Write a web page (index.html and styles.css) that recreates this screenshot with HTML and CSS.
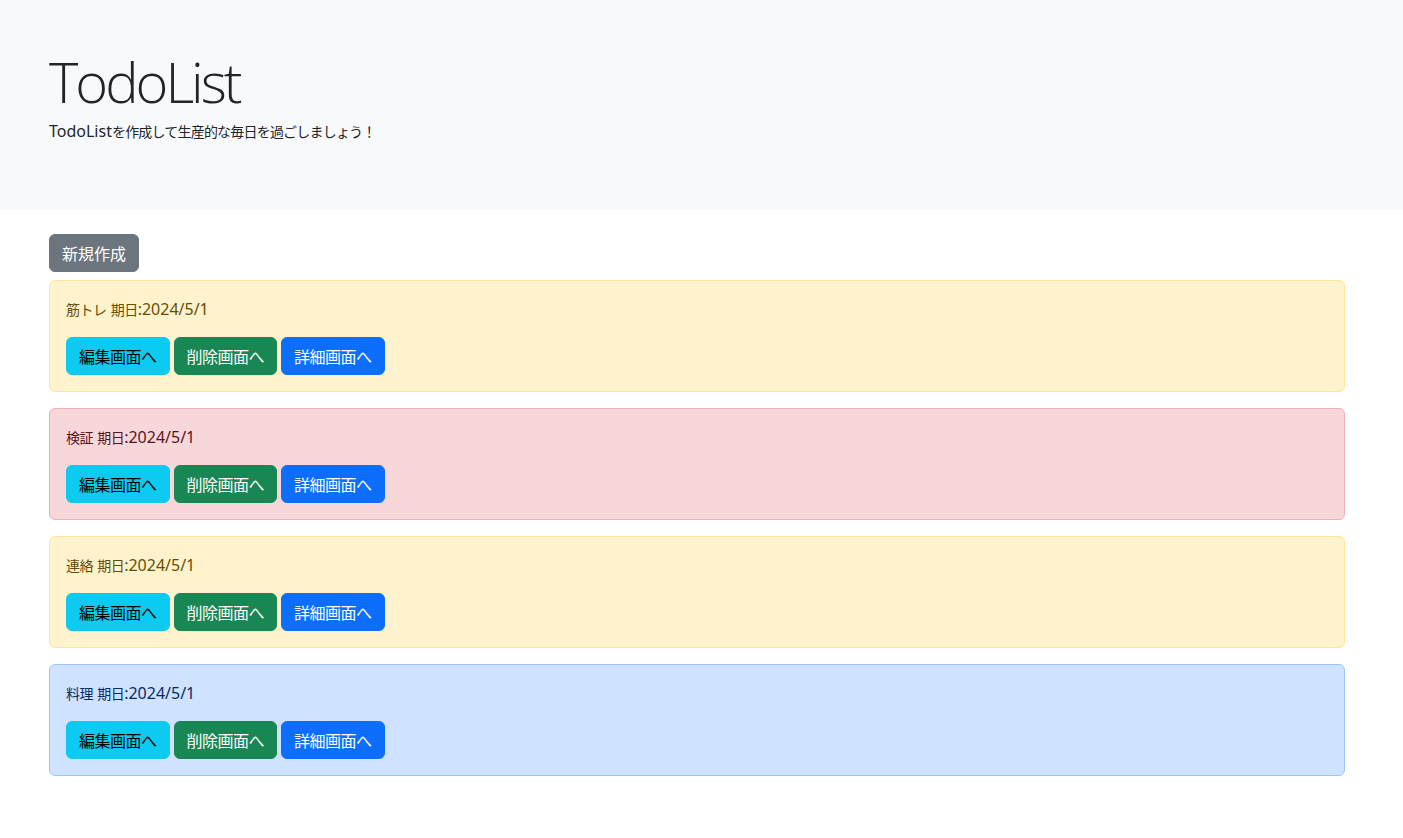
FILE: index.html
```html
<!DOCTYPE html>
<html lang="ja">
<head>
<meta charset="utf-8">
<title>TodoList</title>
<link rel="stylesheet" href="styles.css">
</head>
<body>
<header class="hero">
  <div class="wrap">
    <h1 class="title">TodoList</h1>
    <p class="lead">TodoList<span class="ja ja-tight">を作成して生産的な毎日を過ごしましょう！</span></p>
  </div>
</header>
<main class="wrap main">
  <a class="btn btn-secondary" href="#">新規作成</a>
  <div class="list">
    <div class="alert alert-warning">
      <p class="todo"><span class="ja">筋トレ</span> <span class="ja">期日</span>:2024/5/1</p>
      <div class="actions">
        <a class="btn btn-info" href="#">編集画面へ</a>
        <a class="btn btn-success" href="#">削除画面へ</a>
        <a class="btn btn-primary" href="#">詳細画面へ</a>
      </div>
    </div>
    <div class="alert alert-danger">
      <p class="todo"><span class="ja">検証</span> <span class="ja">期日</span>:2024/5/1</p>
      <div class="actions">
        <a class="btn btn-info" href="#">編集画面へ</a>
        <a class="btn btn-success" href="#">削除画面へ</a>
        <a class="btn btn-primary" href="#">詳細画面へ</a>
      </div>
    </div>
    <div class="alert alert-warning">
      <p class="todo"><span class="ja">連絡</span> <span class="ja">期日</span>:2024/5/1</p>
      <div class="actions">
        <a class="btn btn-info" href="#">編集画面へ</a>
        <a class="btn btn-success" href="#">削除画面へ</a>
        <a class="btn btn-primary" href="#">詳細画面へ</a>
      </div>
    </div>
    <div class="alert alert-primary">
      <p class="todo"><span class="ja">料理</span> <span class="ja">期日</span>:2024/5/1</p>
      <div class="actions">
        <a class="btn btn-info" href="#">編集画面へ</a>
        <a class="btn btn-success" href="#">削除画面へ</a>
        <a class="btn btn-primary" href="#">詳細画面へ</a>
      </div>
    </div>
  </div>
</main>
</body>
</html>
```
FILE: styles.css
```css
* { box-sizing: border-box; }
html, body { margin: 0; padding: 0; }
body {
  font-family: "Noto Sans", "Noto Sans CJK JP", sans-serif;
  font-size: 16px;
  line-height: 1.5;
  color: #212529;
  background: #fff;
}
.wrap {
  max-width: 1345px;
  padding-left: 49px;
}
.hero {
  background: #f8f9fa;
  padding: 48px 0;
  height: 210px;
}
.title {
  margin: 0 0 4px;
  font-family: "Open Sans", "Noto Sans", sans-serif;
  font-weight: 300;
  font-size: 56px;
  line-height: 67px;
  letter-spacing: -3px;
}
.lead {
  margin: 0;
  font-size: 16px;
  line-height: 24px;
}
.ja {
  font-family: "Noto Sans CJK JP", sans-serif;
  font-size: 14px;
  letter-spacing: -0.5px;
}
.ja-tight {
  letter-spacing: -0.8px;
}
.main {
  padding-top: 24px;
}
.btn {
  display: inline-block;
  padding: 6px 12px;
  border: 1px solid transparent;
  border-radius: 6px;
  font-family: "Noto Sans CJK JP", sans-serif;
  font-size: 16px;
  line-height: 24px;
  text-decoration: none;
  color: #fff;
}
.btn-secondary { background: #6c757d; border-color: #6c757d; }
.btn-info { background: #0dcaf0; border-color: #0dcaf0; color: #000; }
.btn-success { background: #198754; border-color: #198754; }
.btn-primary { background: #0d6efd; border-color: #0d6efd; }
.list {
  margin-top: 8px;
  display: flex;
  flex-direction: column;
  gap: 16px;
}
.alert {
  padding: 16px;
  border: 1px solid;
  border-radius: 6px;
}
.alert-warning { background: #fff3cd; border-color: #ffe69c; color: #664d03; }
.alert-danger { background: #f8d7da; border-color: #f1aeb5; color: #58151c; }
.alert-primary { background: #cfe2ff; border-color: #9ec5fe; color: #052c65; }
.todo {
  margin: 0 0 16px;
  font-size: 16px;
  line-height: 24px;
}
.actions {
  display: flex;
  gap: 4px;
}
.actions .btn {
  letter-spacing: -0.5px;
}
```
